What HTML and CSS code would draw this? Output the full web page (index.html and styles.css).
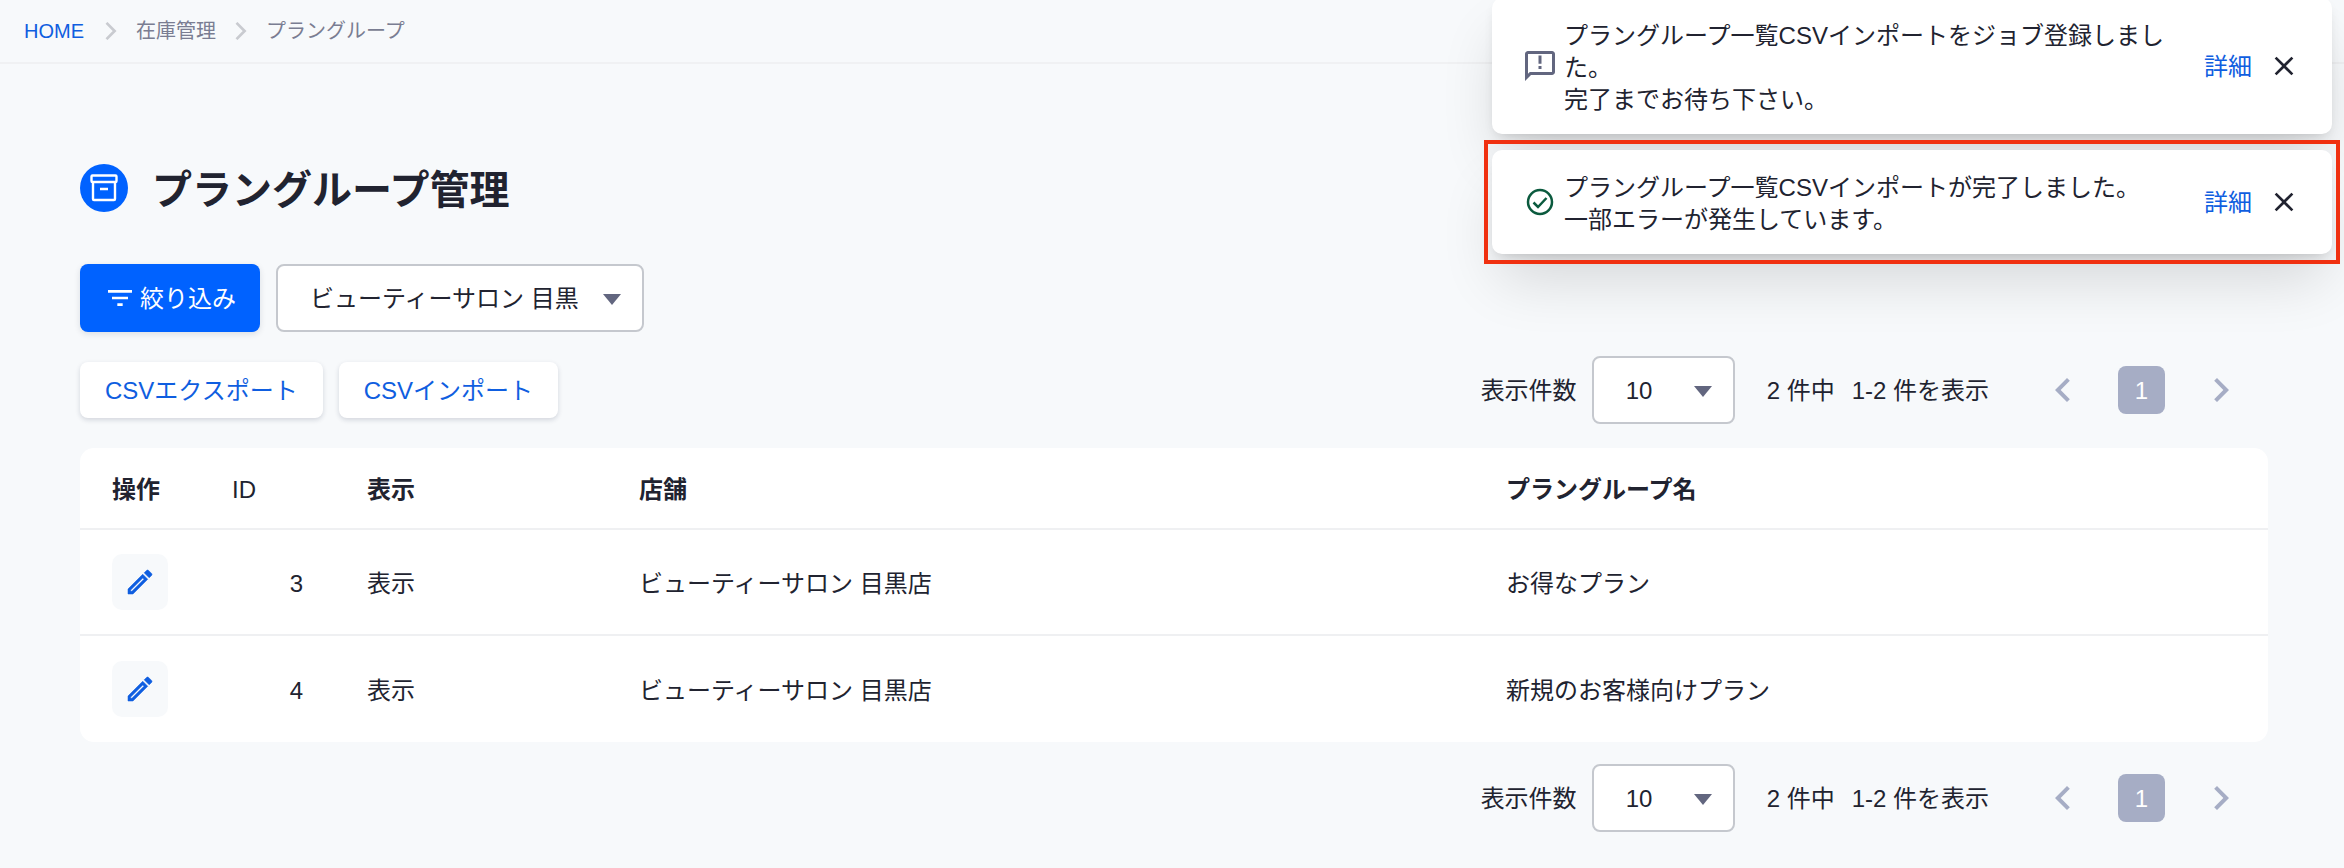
FILE: index.html
```html
<!DOCTYPE html>
<html lang="ja">
<head>
<meta charset="utf-8">
<title>プラングループ管理</title>
<link rel="stylesheet" href="styles.css">
</head>
<body>
<svg class="sprite" aria-hidden="true">
  <symbol id="chevron" viewBox="0 0 12 20"><path d="M1 1l9 9-9 9" fill="none" stroke="currentColor" stroke-width="3"/></symbol>
  <symbol id="caret" viewBox="0 0 18 11"><path d="M0 0h18L9 11z" fill="currentColor"/></symbol>
  <symbol id="left" viewBox="0 0 24 24"><path d="M15.41 7.41L14 6l-6 6 6 6 1.41-1.41L10.83 12z" fill="currentColor"/></symbol>
  <symbol id="right" viewBox="0 0 24 24"><path d="M10 6L8.590 7.410 13.170 12l-4.580 4.590L10 18l6-6z" fill="currentColor"/></symbol>
  <symbol id="edit" viewBox="0 0 24 24"><path d="M14.060 9.020l.92.92L5.920 19H5v-.92l9.060-9.060M17.660 3c-.25 0-.51.1-.7.29l-1.830 1.830 3.750 3.750 1.830-1.830c.39-.39.39-1.020 0-1.410l-2.340-2.340c-.2-.2-.45-.29-.71-.29zm-3.600 3.190L3 17.250V21h3.750L17.810 9.940l-3.750-3.750z" fill="currentColor" stroke="currentColor" stroke-width=".4"/></symbol>
  <symbol id="close" viewBox="0 0 24 24"><path d="M19 6.410L17.590 5 12 10.590 6.410 5 5 6.410 10.590 12 5 17.590 6.410 19 12 13.410 17.590 19 19 17.590 13.410 12z" fill="currentColor"/></symbol>
</svg>

<header class="topbar">
  <nav class="breadcrumb" aria-label="パンくずリスト">
    <a class="breadcrumb-home" href="#">HOME</a>
    <svg class="breadcrumb-sep"><use href="#chevron"/></svg>
    <span>在庫管理</span>
    <svg class="breadcrumb-sep"><use href="#chevron"/></svg>
    <span>プラングループ</span>
  </nav>
</header>

<main class="page">
  <div class="title">
    <span class="title-badge">
      <svg class="title-icon" viewBox="0 0 28 28" fill="none" stroke="currentColor" stroke-width="2.400"><rect x="1.500" y="1.500" width="25" height="6.500" rx="1"/><path d="M3 8v17a1 1 0 0 0 1 1h20a1 1 0 0 0 1-1V8M10 15h8"/></svg>
    </span>
    <h1 class="title-text">プラングループ管理</h1>
  </div>

  <div class="filters">
    <button class="btn-filter" type="button">
      <svg class="icon" viewBox="0 0 24 24"><path d="M10 18h4v-2h-4v2zM3 6v2h18V6H3zm3 7h12v-2H6v2z" fill="currentColor"/></svg>
      <span class="btn-filter-text">絞り込み</span>
    </button>
    <div class="select select-shop">
      <select class="select-field" aria-label="店舗"><option>ビューティーサロン 目黒</option></select>
      <svg class="select-caret"><use href="#caret"/></svg>
    </div>
  </div>

  <div class="toolbar">
    <div class="csv">
      <button class="btn-csv" type="button">CSVエクスポート</button>
      <button class="btn-csv" type="button">CSVインポート</button>
    </div>
    <div class="pager">
      <label class="pager-label" for="size-top">表示件数</label>
      <div class="select select-size">
        <select class="select-field" id="size-top"><option>10</option></select>
        <svg class="select-caret"><use href="#caret"/></svg>
      </div>
      <p class="pager-info"><span>2 件中</span><span>1-2 件を表示</span></p>
      <div class="pager-nav">
        <button class="pager-arrow" type="button" aria-label="前へ"><svg class="pager-icon"><use href="#left"/></svg></button>
        <button class="pager-page" type="button">1</button>
        <button class="pager-arrow" type="button" aria-label="次へ"><svg class="pager-icon"><use href="#right"/></svg></button>
      </div>
    </div>
  </div>

  <table class="list">
    <thead>
      <tr><th class="col-action">操作</th><th class="col-id">ID</th><th class="col-show">表示</th><th class="col-shop">店舗</th><th>プラングループ名</th></tr>
    </thead>
    <tbody>
      <tr>
        <td class="action"><button class="btn-edit" type="button" aria-label="編集"><svg class="icon"><use href="#edit"/></svg></button></td>
        <td class="num">3</td><td>表示</td><td>ビューティーサロン 目黒店</td><td>お得なプラン</td>
      </tr>
      <tr>
        <td class="action"><button class="btn-edit" type="button" aria-label="編集"><svg class="icon"><use href="#edit"/></svg></button></td>
        <td class="num">4</td><td>表示</td><td>ビューティーサロン 目黒店</td><td>新規のお客様向けプラン</td>
      </tr>
    </tbody>
  </table>

  <div class="pager">
    <label class="pager-label" for="size-bottom">表示件数</label>
    <div class="select select-size">
      <select class="select-field" id="size-bottom"><option>10</option></select>
      <svg class="select-caret"><use href="#caret"/></svg>
    </div>
    <p class="pager-info"><span>2 件中</span><span>1-2 件を表示</span></p>
    <div class="pager-nav">
      <button class="pager-arrow" type="button" aria-label="前へ"><svg class="pager-icon"><use href="#left"/></svg></button>
      <button class="pager-page" type="button">1</button>
      <button class="pager-arrow" type="button" aria-label="次へ"><svg class="pager-icon"><use href="#right"/></svg></button>
    </div>
  </div>
</main>

<aside class="toasts" aria-label="通知">
  <div class="toast" role="status">
    <svg class="toast-icon toast-icon-info" viewBox="0 0 24 24"><path d="M20 2H4c-1.100 0-2 .9-2 2v18l4-4h14c1.100 0 2-.9 2-2V4c0-1.100-.9-2-2-2zm0 14H5.200L4 17.200V4h16v12zM11 12h2v2h-2zM11 5h2v5.500h-2z" fill="currentColor"/></svg>
    <p class="toast-text">プラングループ一覧CSVインポートをジョブ登録しました。<br>完了までお待ち下さい。</p>
    <a class="toast-link" href="#">詳細</a>
    <button class="toast-close" type="button" aria-label="閉じる"><svg class="toast-x"><use href="#close"/></svg></button>
  </div>
  <div class="toast toast-marked" role="status">
    <svg class="toast-icon toast-icon-done" viewBox="0 0 36 36" fill="none" stroke="currentColor" stroke-width="2.500"><circle cx="18" cy="18" r="12"/><path d="M11.500 18.500l4.500 4.500 8.500-9"/></svg>
    <p class="toast-text">プラングループ一覧CSVインポートが完了しました。<br>一部エラーが発生しています。</p>
    <a class="toast-link" href="#">詳細</a>
    <button class="toast-close" type="button" aria-label="閉じる"><svg class="toast-x"><use href="#close"/></svg></button>
  </div>
</aside>
</body>
</html>
```
FILE: styles.css
```css
* { box-sizing: border-box; }

body {
  margin: 0;
  background: #f7f9fb;
  color: #212330;
  font: 24px/32px "Liberation Sans", "Noto Sans CJK JP", sans-serif;
}

button, select { font: inherit; color: inherit; margin: 0; cursor: pointer; }
button { border: 0; padding: 0; }
a { color: #0f5ee0; text-decoration: none; }
p, h1 { margin: 0; }
svg { display: block; flex: none; }
.sprite { display: none; }
.icon { width: 32px; height: 32px; }

.topbar {
  height: 64px;
  padding: 0 24px;
  border-bottom: 2px solid #f0f1f3;
}
.breadcrumb {
  display: flex;
  align-items: center;
  gap: 19px;
  height: 62px;
  font-size: 20px;
  color: #7a7d92;
}
.breadcrumb-home { margin-right: 2px; }
.breadcrumb-sep { width: 12px; height: 18px; color: #c9cbd0; }

.page {
  display: flex;
  flex-direction: column;
  padding: 100px 76px 36px 80px;
}

.title { display: flex; align-items: center; gap: 24px; }
.title-badge {
  display: grid;
  place-items: center;
  width: 48px;
  height: 48px;
  border-radius: 50%;
  background: #0062ff;
  color: #fff;
}
.title-icon { width: 28px; height: 28px; }
.title-text { padding-top: 4px; font-size: 40px; line-height: 44px; font-weight: 700; }

.filters { display: flex; gap: 16px; margin-top: 52px; }
.btn-filter {
  display: flex;
  align-items: center;
  gap: 4px;
  height: 68px;
  padding: 0 24px;
  border-radius: 8px;
  background: #0062ff;
  color: #fff;
  box-shadow: 0 2px 6px rgba(20, 30, 60, .12);
}
.btn-filter-text { padding-top: 2px; }

.select { position: relative; height: 68px; }
.select-shop { width: 368px; }
.select-size { width: 143px; }
.select-field {
  appearance: none;
  width: 100%;
  height: 100%;
  padding: 2px 32px 0;
  border: 2px solid #c5c8ce;
  border-radius: 8px;
  background: #fff;
}
.select-caret {
  position: absolute;
  right: 23px;
  top: 30px;
  width: 18px;
  height: 11px;
  color: #62667f;
  pointer-events: none;
}

.toolbar {
  display: flex;
  justify-content: space-between;
  align-items: center;
  margin: 24px 0;
}
.csv { display: flex; gap: 16px; }
.btn-csv {
  height: 56px;
  padding: 2px 25px 0;
  border-radius: 8px;
  background: #fff;
  color: #0f5ee0;
  box-shadow: 0 2px 5px rgba(20, 30, 60, .16);
}

.pager {
  display: flex;
  align-items: center;
  justify-content: flex-end;
  padding-right: 24px;
}
.pager-label { margin-right: 15px; padding-top: 2px; }
.pager-info { display: flex; gap: 17px; margin: 0 50px 0 32px; padding-top: 2px; }
.pager-nav { display: flex; align-items: center; gap: 32px; }
.pager-arrow, .pager-page {
  display: grid;
  place-items: center;
  width: 47px;
  height: 48px;
}
.pager-arrow { background: none; color: #a6adc5; }
.pager-page { padding-top: 2px; border-radius: 8px; background: #a6adc5; color: #fff; }
.pager-icon { width: 48px; height: 48px; }

.list {
  width: 100%;
  margin-bottom: 22px;
  border-spacing: 0;
  border-radius: 14px;
  background: #fff;
  table-layout: fixed;
}
.list th, .list td { padding: 3px 0 0 32px; text-align: left; }
.list th { height: 82px; border-bottom: 2px solid #eff0f2; font-weight: 700; }
.list td { height: 106px; }
.list td.action { padding-top: 0; }
.list tbody tr:not(:last-child) td { border-bottom: 2px solid #eff0f2; }
.list .col-action { width: 120px; }
.list .col-id { width: 135px; font-weight: 400; }
.list .col-show { width: 272px; }
.list .col-shop { width: 867px; }
.list td.num { padding-right: 32px; text-align: right; }
.btn-edit {
  display: grid;
  place-items: center;
  width: 56px;
  height: 56px;
  border-radius: 10px;
  background: #f7f9fb;
  color: #0f5ee0;
}

.toasts {
  position: absolute;
  top: -2px;
  right: 12px;
  display: grid;
  gap: 16px;
  width: 840px;
}
.toast {
  display: flex;
  align-items: center;
  padding: 20px 32px 20px 30px;
  border-radius: 10px;
  background: #fff;
  box-shadow: 0 6px 14px -6px rgba(0, 0, 0, .2), 0 32px 60px -8px rgba(0, 0, 0, .14);
}
.toast-icon { width: 36px; height: 36px; margin-right: 6px; }
.toast-icon-info { color: #62667f; }
.toast-icon-done { color: #0b5a3e; }
.toast-text { flex: 1; max-width: 616px; margin: 2px auto -2px 0; }
.toast-link { margin: 0 16px; padding-top: 2px; }
.toast-close { width: 32px; height: 32px; background: none; }
.toast-x { width: 32px; height: 32px; }

.toast-marked { position: relative; }
.toast-marked::after {
  content: "";
  position: absolute;
  inset: -10px -8px;
  border: 4px solid #f03010;
  pointer-events: none;
}
```
